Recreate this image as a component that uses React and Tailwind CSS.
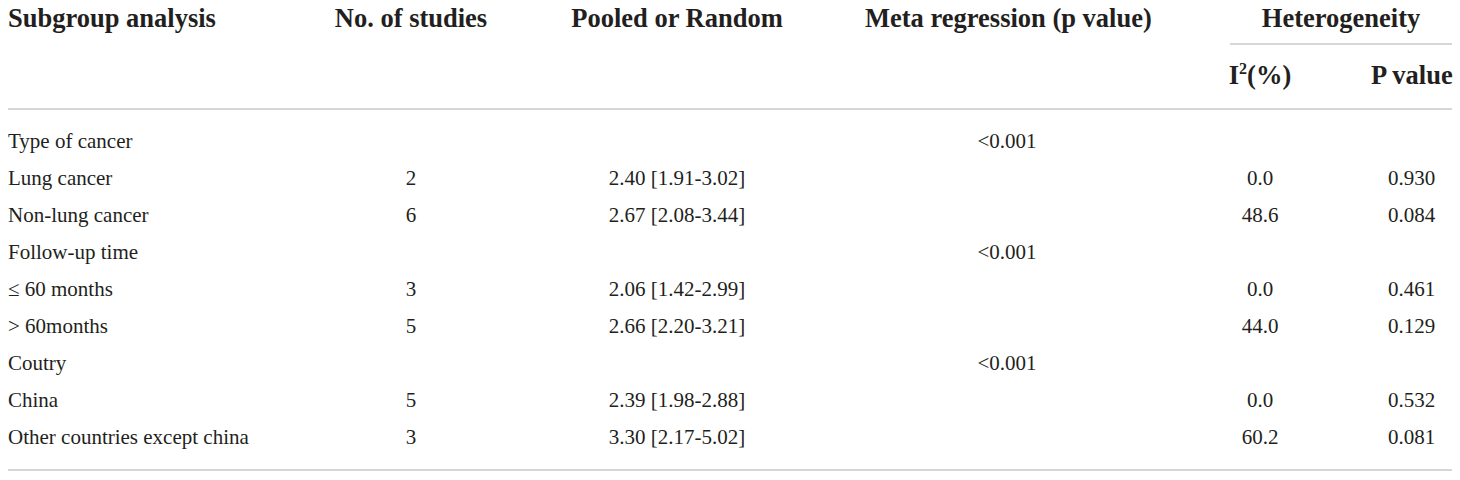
import React from 'react'

const widths = ['w-[325px]', 'w-[156px]', 'w-[376px]', 'w-[284px]', 'w-[222px]', 'w-[81px]']

const rows = [
  ['Type of cancer', '', '', '<0.001', '', ''],
  ['Lung cancer', '2', '2.40 [1.91-3.02]', '', '0.0', '0.930'],
  ['Non-lung cancer', '6', '2.67 [2.08-3.44]', '', '48.6', '0.084'],
  ['Follow-up time', '', '', '<0.001', '', ''],
  ['≤ 60 months', '3', '2.06 [1.42-2.99]', '', '0.0', '0.461'],
  ['> 60months', '5', '2.66 [2.20-3.21]', '', '44.0', '0.129'],
  ['Coutry', '', '', '<0.001', '', ''],
  ['China', '5', '2.39 [1.98-2.88]', '', '0.0', '0.532'],
  ['Other countries except china', '3', '3.30 [2.17-5.02]', '', '60.2', '0.081'],
]

export default function App() {
  return (
    <div className="w-[1460px] h-[480px] bg-white px-2 text-[#231f20] font-['Liberation_Serif',serif]">
      {/* header */}
      <div className="flex h-[45px] text-[26.5px] leading-[30px] font-bold">
        <div className={`${widths[0]} pt-[3px] whitespace-nowrap`}>Subgroup analysis</div>
        <div className={`${widths[1]} pt-[3px] text-center whitespace-nowrap`}>No. of studies</div>
        <div className={`${widths[2]} pt-[3px] text-center whitespace-nowrap`}>Pooled or Random</div>
        <div className={`${widths[3]} pt-[3px] text-center whitespace-nowrap`}>Meta regression (p value)</div>
        <div className="w-[303px] pl-[81px]">
          <div className="h-full pt-[3px] text-center border-b-2 border-[#d6d6d6] whitespace-nowrap">Heterogeneity</div>
        </div>
      </div>
      <div className="flex h-[65px] text-[26.5px] leading-[30px] font-bold border-b-2 border-[#d6d6d6]">
        <div className="w-[1141px]" />
        <div className={`${widths[4]} pt-[15px] text-center whitespace-nowrap`}>
          I<span className="text-[16px] leading-none align-[10px]">2</span>(%)
        </div>
        <div className={`${widths[5]} pt-[15px] text-center whitespace-nowrap`}>P value</div>
      </div>

      {/* body */}
      <div className="pt-[13px] pb-[13px] border-b-2 border-[#d6d6d6] text-[21px]">
        {rows.map((r, i) => (
          <div key={i} className="flex h-[37px] leading-[37px]">
            {r.map((c, j) => (
              <div key={j} className={`${widths[j]} whitespace-nowrap ${j === 0 ? 'text-left' : 'text-center'}`}>
                {c}
              </div>
            ))}
          </div>
        ))}
      </div>
    </div>
  )
}
